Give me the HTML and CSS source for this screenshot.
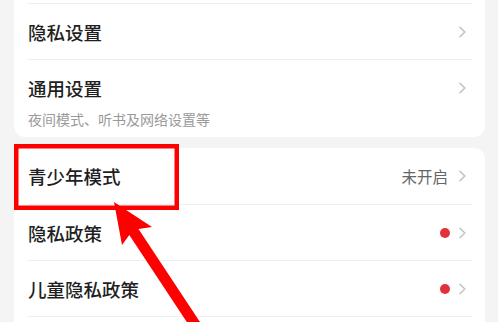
FILE: index.html
```html
<!DOCTYPE html>
<html lang="zh-CN">
<head>
<meta charset="utf-8">
<title>设置</title>
<link rel="stylesheet" href="styles.css">
</head>
<body>
<div class="page">
  <section class="card card-first">
    <div class="row" aria-hidden="true"></div>
    <div class="row"><span class="title">隐私设置</span><span class="right"><svg class="chev" viewBox="0 0 7 12"><path d="M1 1.2 L5.8 6 L1 10.8"/></svg></span></div>
    <div class="row row-sub">
      <div class="texts">
        <div class="title">通用设置</div>
        <div class="sub">夜间模式、听书及网络设置等</div>
      </div>
      <span class="right top"><svg class="chev" viewBox="0 0 7 12"><path d="M1 1.2 L5.8 6 L1 10.8"/></svg></span>
    </div>
  </section>
  <section class="card card-second">
    <div class="row row-tall"><span class="title">青少年模式</span><span class="right"><span class="value">未开启</span><svg class="chev" viewBox="0 0 7 12"><path d="M1 1.2 L5.8 6 L1 10.8"/></svg></span></div>
    <div class="row"><span class="title">隐私政策</span><span class="right"><span class="dot"></span><svg class="chev" viewBox="0 0 7 12"><path d="M1 1.2 L5.8 6 L1 10.8"/></svg></span></div>
    <div class="row"><span class="title">儿童隐私政策</span><span class="right"><span class="dot"></span><svg class="chev" viewBox="0 0 7 12"><path d="M1 1.2 L5.8 6 L1 10.8"/></svg></span></div>
    <div class="row" aria-hidden="true"></div>
  </section>
</div>
<svg class="annot" viewBox="0 0 498 322" width="498" height="322">
  <rect x="16.25" y="146.25" width="160.5" height="61.5" fill="none" stroke="#fe0000" stroke-width="4.5"/>
  <polygon fill="#fe0000" points="114,202 122,245 129.3,235 203.2,346.8 212.4,340.8 138.5,229 152,227"/>
</svg>
</body>
</html>
```

FILE: styles.css
```css
html, body {
  margin: 0;
  padding: 0;
}
body {
  width: 498px;
  height: 322px;
  overflow: hidden;
  position: relative;
  background: #f4f4f4;
  font-family: "Noto Sans CJK SC", "Noto Sans", sans-serif;
}
.page {
  padding: 0 13px 0 14px;
}
.card {
  background: #fff;
  border-radius: 11px;
  padding: 0 13px 0 14px;
}
.card-first {
  margin-top: -52px;
}
.card-second {
  margin-top: 11px;
}
.row {
  display: flex;
  align-items: center;
  justify-content: space-between;
  height: 55px;
  border-bottom: 1px solid #efefef;
  padding-right: 6px;
}
.row-tall {
  height: 56px;
}
.card-first .row-sub {
  height: auto;
  border-bottom: none;
  align-items: flex-start;
  padding-top: 18px;
  padding-bottom: 9px;
}
.title {
  font-size: 18.5px;
  line-height: 20px;
  font-weight: 500;
  color: #1f1f1f;
}
.sub {
  margin-top: 12px;
  font-size: 14px;
  line-height: 18px;
  color: #9a9a9a;
}
.right {
  display: flex;
  align-items: center;
}
.right.top {
  height: 20px;
}
.value {
  font-size: 15.5px;
  color: #666;
  margin-right: 11px;
}
.dot {
  width: 10px;
  height: 10px;
  border-radius: 50%;
  background: #e3303a;
  margin-right: 9px;
}
.chev {
  width: 7px;
  height: 12px;
  display: block;
}
.chev path {
  fill: none;
  stroke: #c2c2c2;
  stroke-width: 1.5;
  stroke-linecap: round;
  stroke-linejoin: round;
}
.annot {
  position: absolute;
  top: 0;
  left: 0;
  pointer-events: none;
}
```
